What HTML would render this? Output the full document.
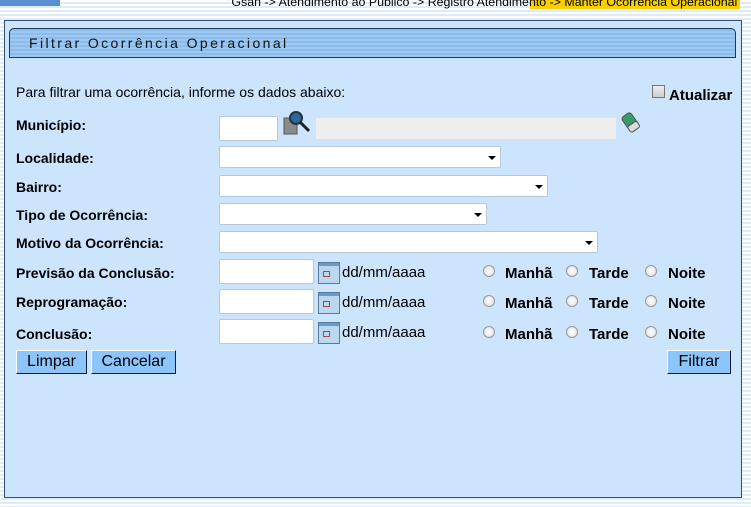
<!DOCTYPE html>
<html><head><meta charset="utf-8"><style>
body{margin:0;width:751px;height:507px;overflow:hidden;font-family:"Liberation Sans",Arial,sans-serif;
background:repeating-linear-gradient(#fff 0,#fff 2px,#dcecf8 2px,#dcecf8 4px);position:relative}
.a{position:absolute}
.panel{left:4px;top:20px;width:736px;height:476px;background:#cce4fc;border:1px solid #34506a;}
.hdr{left:9px;top:28px;width:725px;height:28px;border:1px solid #1e3a56;border-radius:5px 5px 0 0;
background:repeating-linear-gradient(#8cbcec 0,#8cbcec 2px,#9cc8f2 2px,#9cc8f2 4px);}
.hdr span{position:absolute;left:19px;top:6px;font-size:14px;letter-spacing:2.4px;color:#111}
.lbl{font-size:14px;font-weight:bold;color:#000}
.t{font-size:14px;color:#000}
.in{background:#fff;border:1px solid #b8c8d8;border-radius:2px;box-sizing:border-box}
.sel{background:#fff;border:1px solid #b8c8d8;border-radius:2px;box-sizing:border-box;height:22px}
.sel:after{content:"";position:absolute;right:4px;top:9px;border:4px solid transparent;border-top:4px solid #000;border-bottom:0}
.btn{background:#8cc4fc;border:1px solid #fff;border-right-color:#0a1a3a;border-bottom-color:#0a1a3a;font-size:16px;text-align:center;box-sizing:border-box;height:24px;line-height:22px}
.rad{width:10px;height:10px;border-radius:50%;border:1px solid #999;background:radial-gradient(#fff,#ddd)}
.cal{width:22px;height:22px;background:linear-gradient(#6a9acc 0,#6a9acc 3px,#bcd8ee 3px);border:1px solid #5a7a9a;box-sizing:border-box}
.cal:after{content:"";position:absolute;left:4px;top:8px;width:5px;height:4px;border:1px solid #a44}
.r{font-size:15px}
</style></head><body>
<div class="a" style="left:0;top:0;width:60px;height:6px;background:#5a8ed0"></div>
<div class="a" style="left:530px;top:0;width:210px;height:9px;background:#f8d000"></div>
<div class="a t" style="left:227px;top:-5px;font-size:12.4px;white-space:nowrap">"Gsan -> Atendimento ao Público -> Registro Atendimento -> Manter Ocorrência Operacional"</div>
<div class="a panel"></div>
<div class="a hdr"><span>Filtrar Ocorrência Operacional</span></div>
<div class="a t" style="left:16px;top:84px">Para filtrar uma ocorrência, informe os dados abaixo:</div>
<div class="a" style="left:652px;top:85px;width:11px;height:11px;border:1px solid #777;background:linear-gradient(#eee,#ccc)"></div>
<div class="a lbl" style="left:669px;top:87px;font-size:15px">Atualizar</div>

<div class="a lbl" style="left:16px;top:117px">Município:</div>
<div class="a in" style="left:219px;top:116px;width:59px;height:25px"></div>
<svg class="a" style="left:282px;top:109px" width="30" height="27"><rect x="2" y="9" width="13" height="16" fill="#8a8a8a" stroke="#555"/><circle cx="14" cy="9" r="6" fill="#2a6a9a" stroke="#234" stroke-width="2"/><line x1="18" y1="13" x2="27" y2="22" stroke="#222" stroke-width="3"/></svg>
<div class="a" style="left:316px;top:118px;width:300px;height:21px;background:#eee"></div>
<svg class="a" style="left:620px;top:110px" width="22" height="24"><g transform="rotate(-35 11 12)"><rect x="5" y="3" width="11" height="18" rx="3" fill="#3a9a6a" stroke="#555"/><rect x="5" y="14" width="11" height="7" rx="2" fill="#ddd" stroke="#555"/></g></svg>

<div class="a lbl" style="left:16px;top:150px">Localidade:</div>
<div class="a sel" style="left:219px;top:146px;width:282px"></div>
<div class="a lbl" style="left:16px;top:179px">Bairro:</div>
<div class="a sel" style="left:219px;top:175px;width:329px"></div>
<div class="a lbl" style="left:16px;top:207px">Tipo de Ocorrência:</div>
<div class="a sel" style="left:219px;top:203px;width:268px"></div>
<div class="a lbl" style="left:16px;top:235px">Motivo da Ocorrência:</div>
<div class="a sel" style="left:219px;top:231px;width:379px"></div>

<div class="a lbl" style="left:16px;top:265px">Previsão da Conclusão:</div>
<div class="a lbl" style="left:16px;top:294px">Reprogramação:</div>
<div class="a lbl" style="left:16px;top:326px">Conclusão:</div>

<div class="a in" style="left:219px;top:259px;width:95px;height:25px"></div>
<div class="a cal" style="left:318px;top:262px"></div>
<div class="a t r" style="left:342px;top:264px">dd/mm/aaaa</div>
<div class="a in" style="left:219px;top:289px;width:95px;height:25px"></div>
<div class="a cal" style="left:318px;top:292px"></div>
<div class="a t r" style="left:342px;top:294px">dd/mm/aaaa</div>
<div class="a in" style="left:219px;top:319px;width:95px;height:25px"></div>
<div class="a cal" style="left:318px;top:322px"></div>
<div class="a t r" style="left:342px;top:324px">dd/mm/aaaa</div>

<div class="a rad" style="left:483px;top:265px"></div><div class="a lbl r" style="left:505px;top:265px">Manhã</div>
<div class="a rad" style="left:566px;top:265px"></div><div class="a lbl r" style="left:589px;top:265px">Tarde</div>
<div class="a rad" style="left:645px;top:265px"></div><div class="a lbl r" style="left:668px;top:265px">Noite</div>
<div class="a rad" style="left:483px;top:295px"></div><div class="a lbl r" style="left:505px;top:295px">Manhã</div>
<div class="a rad" style="left:566px;top:295px"></div><div class="a lbl r" style="left:589px;top:295px">Tarde</div>
<div class="a rad" style="left:645px;top:295px"></div><div class="a lbl r" style="left:668px;top:295px">Noite</div>
<div class="a rad" style="left:483px;top:326px"></div><div class="a lbl r" style="left:505px;top:326px">Manhã</div>
<div class="a rad" style="left:566px;top:326px"></div><div class="a lbl r" style="left:589px;top:326px">Tarde</div>
<div class="a rad" style="left:645px;top:326px"></div><div class="a lbl r" style="left:668px;top:326px">Noite</div>

<div class="a btn" style="left:16px;top:350px;width:71px">Limpar</div>
<div class="a btn" style="left:91px;top:350px;width:85px">Cancelar</div>
<div class="a btn" style="left:667px;top:350px;width:64px">Filtrar</div>
</body></html>
